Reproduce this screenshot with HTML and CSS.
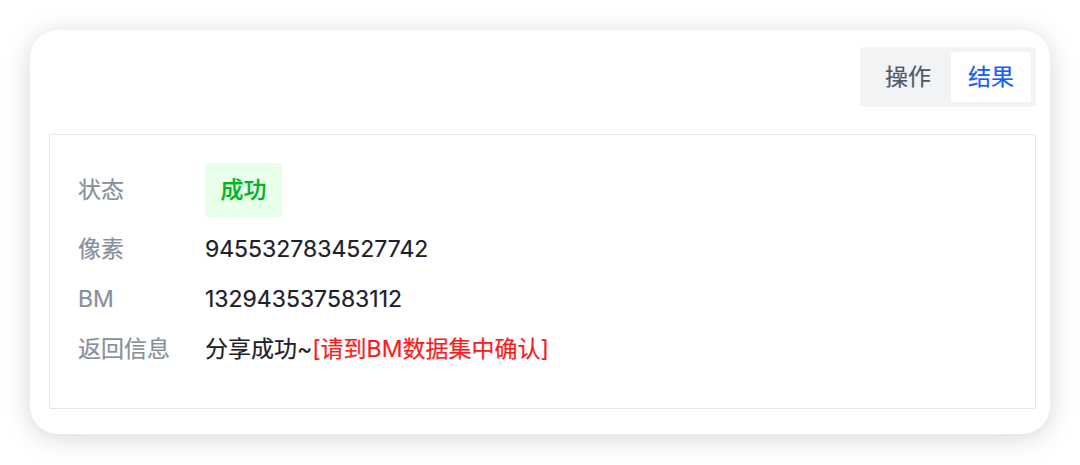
FILE: index.html
```html
<!DOCTYPE html>
<html lang="zh-CN">
<head>
<meta charset="utf-8">
<title>结果</title>
<link rel="stylesheet" href="styles.css">
</head>
<body>
<div class="card">
  <div class="toolbar">
    <div class="segment">
      <button class="seg-btn">操作</button>
      <button class="seg-btn active">结果</button>
    </div>
  </div>
  <div class="box">
    <div class="row row-first">
      <div class="label">状态</div>
      <div class="value"><span class="tag">成功</span></div>
    </div>
    <div class="row">
      <div class="label">像素</div>
      <div class="value">9455327834527742</div>
    </div>
    <div class="row">
      <div class="label">BM</div>
      <div class="value">132943537583112</div>
    </div>
    <div class="row">
      <div class="label">返回信息</div>
      <div class="value">分享成功~<span class="warn">[请到BM数据集中确认]</span></div>
    </div>
  </div>
</div>
</body>
</html>
```

FILE: styles.css
```css
html, body {
  margin: 0;
  background: #ffffff;
}
body {
  padding: 30px;
  font-family: Inter, "Noto Sans CJK SC", sans-serif;
  font-size: 23px;
}
.card {
  width: 1020px;
  height: 404px;
  box-sizing: border-box;
  background: #fff;
  border-radius: 28px;
  box-shadow: 0 4px 26px rgba(0, 0, 0, 0.16);
  padding: 17px 14px 25px 19px;
}
.toolbar {
  display: flex;
  justify-content: flex-end;
}
.segment {
  display: flex;
  background: #f2f3f5;
  padding: 5px;
  border-radius: 4px;
}
.seg-btn {
  border: 0;
  margin: 0;
  background: transparent;
  font: inherit;
  font-size: 23px;
  line-height: 50px;
  height: 50px;
  padding: 0;
  width: 86px;
  color: #4e5969;
  border-radius: 2px;
  -webkit-text-stroke: 0.2px currentColor;
}
.seg-btn.active {
  width: 80px;
  background: #fff;
  color: #165dff;
}
.box {
  margin-top: 27px;
  border: 1px solid #e5e6eb;
  border-radius: 2px;
  height: 275px;
  box-sizing: border-box;
  padding: 18px 28px 0;
}
.row {
  display: flex;
  align-items: center;
  height: 50px;
  line-height: 30px;
  -webkit-text-stroke: 0.2px currentColor;
}
.row-first {
  height: 71px;
  padding-top: 10px;
  padding-bottom: 7px;
  box-sizing: border-box;
}
.label {
  width: 127px;
  flex: none;
  color: #86909c;
}
.value {
  color: #1d2129;
}
.tag {
  display: inline-block;
  background: #e8ffea;
  color: #00b42a;
  padding: 12px 15.5px;
  border-radius: 3px;
  line-height: 30px;
  font-weight: 500;
}
.warn {
  color: #f81d1d;
}
```
